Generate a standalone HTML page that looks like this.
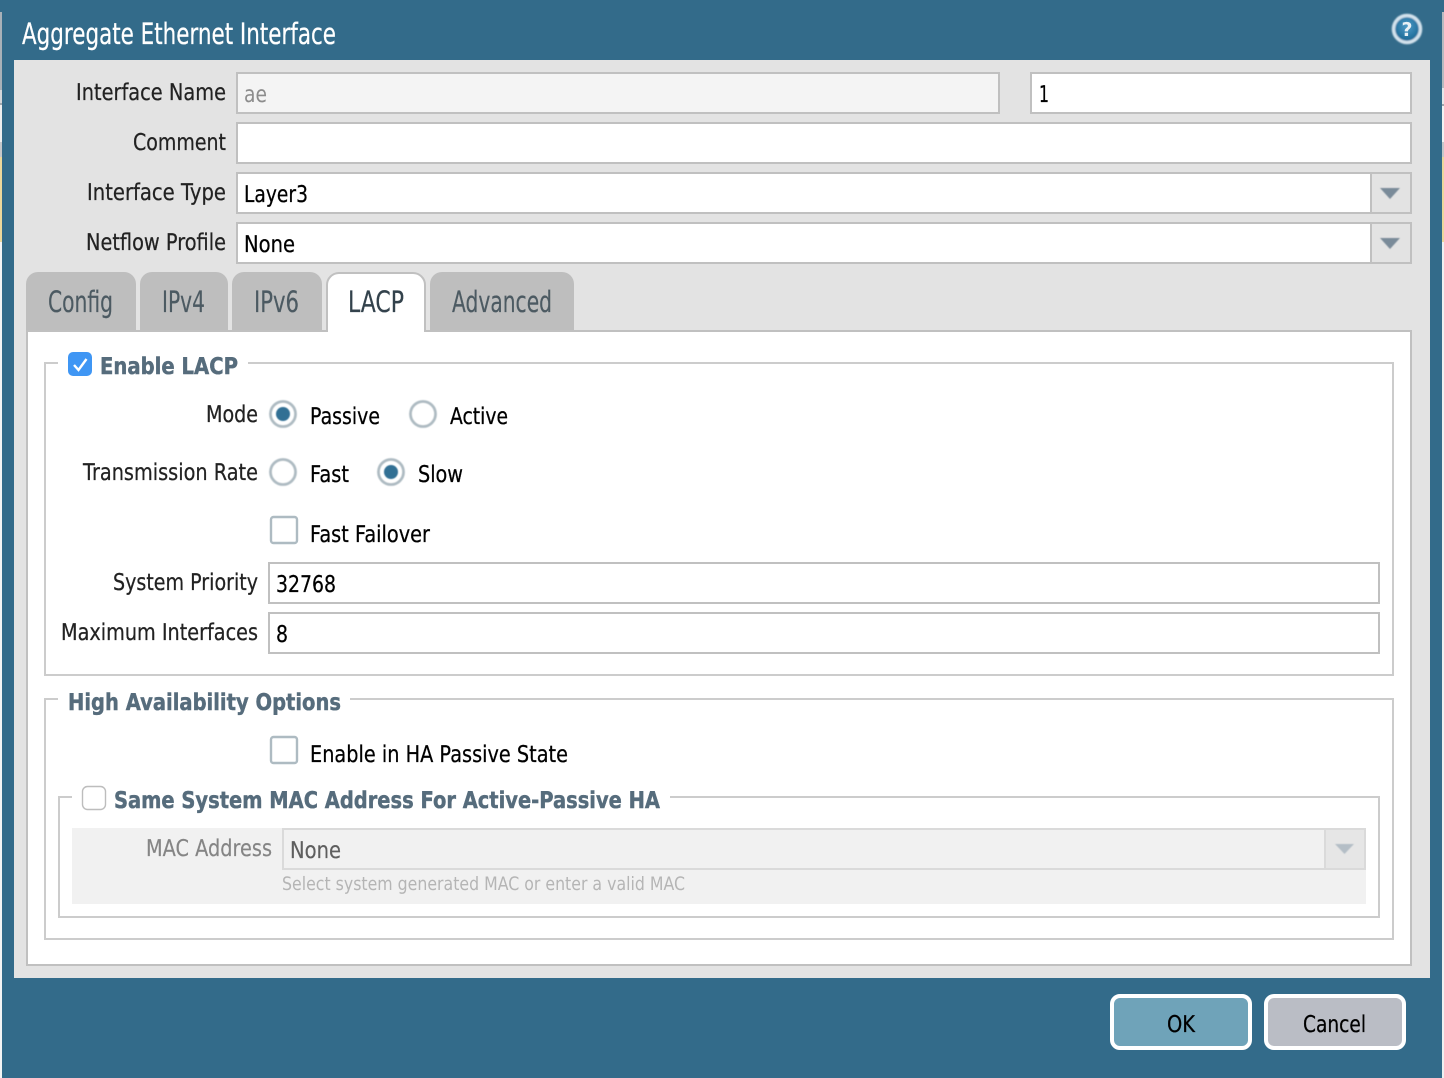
<!DOCTYPE html>
<html><head><meta charset="utf-8"><title>Aggregate Ethernet Interface</title>
<style>
html,body{margin:0;padding:0;background:#336b8a;width:1444px;height:1078px;overflow:hidden}
svg{display:block}
text{font-family:"DejaVu Sans","Liberation Sans",sans-serif;font-size:23px;fill:#1c1c1c;stroke:currentColor;stroke-width:0;paint-order:stroke}
.l{fill:#222;stroke:#222;stroke-width:.25px}
.v{fill:#000;stroke:#000;stroke-width:.25px}
.tab{font-size:29.500px;fill:#4c5a62;stroke:#4c5a62;stroke-width:.2px}
.b{font-weight:bold;fill:#566c7c;stroke:#566c7c;stroke-width:.45px}
</style></head><body>
<svg width="1444" height="1078" viewBox="0 0 1444 1078" xmlns="http://www.w3.org/2000/svg" text-rendering="geometricPrecision">
<defs>
<radialGradient id="h" cx="50%" cy="40%" r="60%"><stop offset="0" stop-color="#4f9bc7"/><stop offset="1" stop-color="#14628f"/></radialGradient>
<filter id="s" x="-20%" y="-20%" width="140%" height="140%"><feGaussianBlur stdDeviation=".6"/></filter>
<filter id="s2" x="-20%" y="-20%" width="140%" height="140%"><feGaussianBlur stdDeviation=".9"/></filter>
</defs>
<rect width="1444" height="1078" fill="#336b8a"/>
<!-- edges -->
<rect x="0" y="12" width="2" height="78" fill="#a9b1b8"/><rect x="0" y="90" width="2" height="13" fill="#d4d6d9"/><rect x="0" y="103" width="2" height="2" fill="#9fa6ac"/><rect x="0" y="105" width="2" height="37" fill="#eeeeee"/><rect x="0" y="142" width="2" height="15" fill="#c6c8ca"/><rect x="0" y="157" width="2" height="85" fill="#ecd79b"/>
<rect x="1442" y="12" width="2" height="76" fill="#b7bbc0"/><rect x="1442" y="88" width="2" height="16" fill="#e6e7e9"/><rect x="1442" y="104" width="2" height="2" fill="#a0a6ab"/><rect x="1442" y="106" width="2" height="36" fill="#f2f2f2"/><rect x="1442" y="142" width="2" height="15" fill="#c6c8ca"/><rect x="1442" y="157" width="2" height="85" fill="#ecd79b"/>
<rect x="1442" y="242" width="2" height="836" fill="#eef0f1"/><rect x="0" y="242" width="2" height="836" fill="#f4f4f4"/>
<!-- title -->
<text x="22" y="44" style="font-size:29.500px;fill:#fff;stroke:#fff;stroke-width:.25px" textLength="314" lengthAdjust="spacingAndGlyphs">Aggregate Ethernet Interface</text>
<circle cx="1407" cy="29" r="13.500" fill="url(#h)" stroke="#d3e2ec" stroke-width="3.500" filter="url(#s2)"/>
<text x="1401.500" y="36" style="font-size:19px;font-weight:bold;fill:#e8f0f5" textLength="11" lengthAdjust="spacingAndGlyphs">?</text>
<!-- panel -->
<rect x="14" y="60" width="1416" height="918" fill="#e3e3e3"/>
<!-- top inputs -->
<g stroke="#c0c0c0" stroke-width="2">
<rect x="237" y="73" width="762" height="40" fill="#f4f4f4"/>
<rect x="1031" y="73" width="380" height="40" fill="#fff"/>
<rect x="237" y="123" width="1174" height="40" fill="#fff"/>
<rect x="237" y="173" width="1174" height="40" fill="#fff"/>
<rect x="1371" y="173" width="40" height="40" fill="#e3e3e3"/>
<rect x="237" y="223" width="1174" height="40" fill="#fff"/>
<rect x="1371" y="223" width="40" height="40" fill="#e3e3e3"/>
</g>
<path d="M1380 188h20l-10 11z" fill="#7a8b99" filter="url(#s)"/>
<path d="M1380 238h20l-10 11z" fill="#7a8b99" filter="url(#s)"/>
<text class="l" x="76" y="100" textLength="150" lengthAdjust="spacingAndGlyphs">Interface Name</text>
<text class="l" x="133" y="150" textLength="93" lengthAdjust="spacingAndGlyphs">Comment</text>
<text class="l" x="87" y="200" textLength="139" lengthAdjust="spacingAndGlyphs">Interface Type</text>
<text class="l" x="86" y="250" textLength="140" lengthAdjust="spacingAndGlyphs">Netflow Profile</text>
<text x="244" y="102" style="fill:#8c8c8c" textLength="23" lengthAdjust="spacingAndGlyphs">ae</text>
<text class="v" x="1039" y="102" textLength="10" lengthAdjust="spacingAndGlyphs">1</text>
<text class="v" x="244" y="202" textLength="64" lengthAdjust="spacingAndGlyphs">Layer3</text>
<text class="v" x="244" y="252" textLength="51" lengthAdjust="spacingAndGlyphs">None</text>
<!-- tabs -->
<g fill="#bebebe">
<path d="M26 332V284a12 12 0 0 1 12-12h86a12 12 0 0 1 12 12v48z"/>
<path d="M140 332V284a12 12 0 0 1 12-12h64a12 12 0 0 1 12 12v48z"/>
<path d="M232 332V284a12 12 0 0 1 12-12h66a12 12 0 0 1 12 12v48z"/>
<path d="M430 332V284a12 12 0 0 1 12-12h120a12 12 0 0 1 12 12v48z"/>
</g>
<!-- content -->
<rect x="27" y="331" width="1384" height="634" fill="#fff" stroke="#c0c0c0" stroke-width="2"/>
<path d="M327 332V285a12 12 0 0 1 12-12h74a12 12 0 0 1 12 12v47" fill="#fff" stroke="#c0c0c0" stroke-width="2"/>
<rect x="328" y="326" width="96" height="8" fill="#fff"/>
<text class="tab" x="48" y="312" textLength="65" lengthAdjust="spacingAndGlyphs">Config</text>
<text class="tab" x="162" y="312" textLength="43" lengthAdjust="spacingAndGlyphs">IPv4</text>
<text class="tab" x="254" y="312" textLength="45" lengthAdjust="spacingAndGlyphs">IPv6</text>
<text class="tab" x="348" y="312" style="fill:#33424c;stroke:#33424c" textLength="56" lengthAdjust="spacingAndGlyphs">LACP</text>
<text class="tab" x="452" y="312" textLength="100" lengthAdjust="spacingAndGlyphs">Advanced</text>
<!-- fieldset 1 -->
<path d="M58 363H45V675H1393V363H248" fill="none" stroke="#cccccc" stroke-width="2"/>
<rect x="68" y="352" width="24" height="24" rx="5" fill="#3f96f4"/>
<path d="M74 365l4.500 5 8-11" fill="none" stroke="#fff" stroke-width="2.400"/>
<text class="b" x="100" y="374" textLength="138" lengthAdjust="spacingAndGlyphs">Enable LACP</text>
<text class="l" x="206" y="422" textLength="52" lengthAdjust="spacingAndGlyphs">Mode</text>
<text class="v" x="310" y="424" textLength="70" lengthAdjust="spacingAndGlyphs">Passive</text>
<text class="v" x="450" y="424" textLength="58" lengthAdjust="spacingAndGlyphs">Active</text>
<text class="l" x="83" y="480" textLength="175" lengthAdjust="spacingAndGlyphs">Transmission Rate</text>
<text class="v" x="310" y="482" textLength="39" lengthAdjust="spacingAndGlyphs">Fast</text>
<text class="v" x="418" y="482" textLength="45" lengthAdjust="spacingAndGlyphs">Slow</text>
<g fill="#fff" stroke="#aebbc2" stroke-width="2.800" filter="url(#s)">
<circle cx="283" cy="414" r="12.500"/>
<circle cx="423" cy="414" r="12.500"/>
<circle cx="283" cy="472" r="12.500"/>
<circle cx="391" cy="472" r="12.500"/>
</g>
<circle cx="283" cy="414" r="7" fill="#336f94" filter="url(#s)"/>
<circle cx="391" cy="472" r="7" fill="#336f94" filter="url(#s)"/>
<rect x="271" y="517" width="26" height="26" rx="2.500" fill="#fff" stroke="#aebbc2" stroke-width="2.400"/>
<text class="v" x="310" y="542" textLength="120" lengthAdjust="spacingAndGlyphs">Fast Failover</text>
<text class="l" x="113" y="590" textLength="145" lengthAdjust="spacingAndGlyphs">System Priority</text>
<rect x="269" y="563" width="1110" height="40" fill="#fff" stroke="#c0c0c0" stroke-width="2"/>
<text class="v" x="276" y="592" textLength="60" lengthAdjust="spacingAndGlyphs">32768</text>
<text class="l" x="61" y="640" textLength="197" lengthAdjust="spacingAndGlyphs">Maximum Interfaces</text>
<rect x="269" y="613" width="1110" height="40" fill="#fff" stroke="#c0c0c0" stroke-width="2"/>
<text class="v" x="276" y="642" textLength="12" lengthAdjust="spacingAndGlyphs">8</text>
<!-- fieldset 2 -->
<path d="M58 699H45V939H1393V699H350" fill="none" stroke="#cccccc" stroke-width="2"/>
<text class="b" x="68" y="710" textLength="273" lengthAdjust="spacingAndGlyphs">High Availability Options</text>
<rect x="271" y="737" width="26" height="26" rx="2.500" fill="#fff" stroke="#aebbc2" stroke-width="2.400"/>
<text class="v" x="310" y="762" textLength="258" lengthAdjust="spacingAndGlyphs">Enable in HA Passive State</text>
<!-- fieldset 3 -->
<path d="M72 797H59V917H1379V797H670" fill="none" stroke="#cccccc" stroke-width="2"/>
<rect x="82.500" y="786.500" width="23" height="23" rx="5" fill="#fff" stroke="#bdbdbd" stroke-width="1.400"/>
<text class="b" x="114" y="808" textLength="546" lengthAdjust="spacingAndGlyphs">Same System MAC Address For Active-Passive HA</text>
<rect x="72" y="828" width="1294" height="76" fill="#f1f1f1"/>
<text x="146" y="856" style="fill:#858585;stroke:#858585;stroke-width:.2px" textLength="126" lengthAdjust="spacingAndGlyphs">MAC Address</text>
<rect x="283" y="829" width="1082" height="40" fill="#f1f1f1" stroke="#dadada" stroke-width="2"/>
<rect x="1325" y="829" width="40" height="40" fill="#e6e6e6" stroke="#dadada" stroke-width="2"/>
<path d="M1335 844h19l-9.500 10z" fill="#b4bec6" filter="url(#s)"/>
<text x="290" y="858" style="fill:#5e5e5e;stroke:#5e5e5e;stroke-width:.2px" textLength="51" lengthAdjust="spacingAndGlyphs">None</text>
<text x="282" y="890" style="font-size:18.500px;fill:#b5b5b5" textLength="403" lengthAdjust="spacingAndGlyphs">Select system generated MAC or enter a valid MAC</text>
<!-- buttons -->
<rect x="1112" y="996" width="138" height="52" rx="8" fill="#6fa3b9" stroke="#fff" stroke-width="4"/>
<rect x="1266" y="996" width="138" height="52" rx="8" fill="#babdc5" stroke="#fff" stroke-width="4"/>
<text class="v" x="1167" y="1032" textLength="28" lengthAdjust="spacingAndGlyphs">OK</text>
<text class="v" x="1303" y="1032" textLength="63" lengthAdjust="spacingAndGlyphs">Cancel</text>
</svg>
</body></html>
